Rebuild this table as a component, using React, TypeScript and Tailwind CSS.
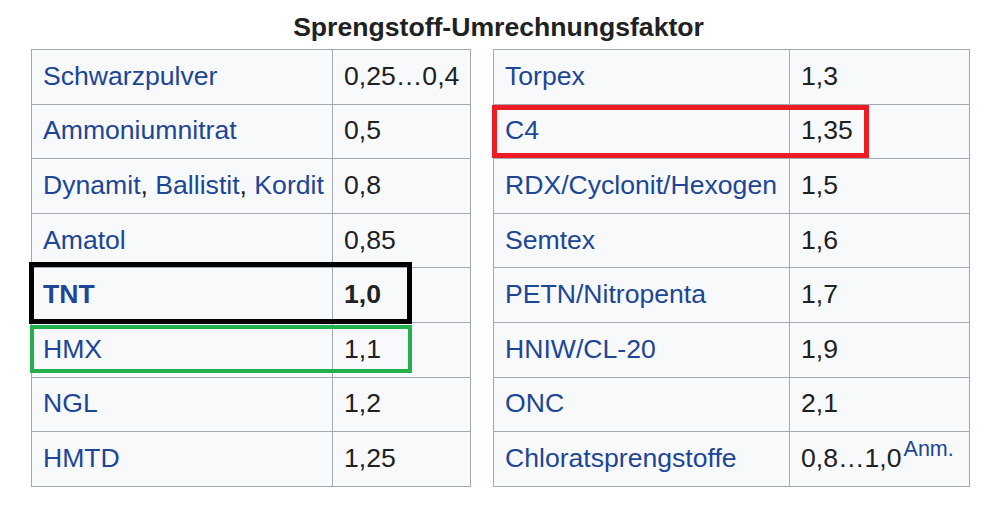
import React from "react";

const LINK = "text-[#1d4696]";

type Row = { name: React.ReactNode; value: React.ReactNode; bold?: boolean };

const left: Row[] = [
  { name: <span className={LINK}>Schwarzpulver</span>, value: "0,25…0,4" },
  { name: <span className={LINK}>Ammoniumnitrat</span>, value: "0,5" },
  {
    name: (
      <span>
        <span className={LINK}>Dynamit</span>, <span className={LINK}>Ballistit</span>,{" "}
        <span className={LINK}>Kordit</span>
      </span>
    ),
    value: "0,8",
  },
  { name: <span className={LINK}>Amatol</span>, value: "0,85" },
  { name: <span className={`${LINK} font-bold`}>TNT</span>, value: <span className="font-bold">1,0</span> },
  { name: <span className={LINK}>HMX</span>, value: "1,1" },
  { name: <span className={LINK}>NGL</span>, value: "1,2" },
  { name: <span className={LINK}>HMTD</span>, value: "1,25" },
];

const right: Row[] = [
  { name: <span className={LINK}>Torpex</span>, value: "1,3" },
  { name: <span className={LINK}>C4</span>, value: "1,35" },
  { name: <span className={LINK}>RDX/Cyclonit/Hexogen</span>, value: "1,5" },
  { name: <span className={LINK}>Semtex</span>, value: "1,6" },
  { name: <span className={LINK}>PETN/Nitropenta</span>, value: "1,7" },
  { name: <span className={LINK}>HNIW/CL-20</span>, value: "1,9" },
  { name: <span className={LINK}>ONC</span>, value: "2,1" },
  {
    name: <span className={LINK}>Chloratsprengstoffe</span>,
    value: (
      <span>
        0,8…1,0<sup className={`${LINK} text-[21.5px] ml-[2px]`}>Anm.</sup>
      </span>
    ),
  },
];

function Table({ rows, c1, c2 }: { rows: Row[]; c1: string; c2: string }) {
  return (
    <div className="flex flex-col border-l border-t border-[#a2a9b1] bg-[#f8f9fa]">
      {rows.map((r, i) => (
        <div key={i} className="flex h-[54.6px]">
          <div className={`${c1} flex items-center border-r border-b border-[#a2a9b1] pl-[11px] whitespace-nowrap`}>
            {r.name}
          </div>
          <div className={`${c2} flex items-center border-r border-b border-[#a2a9b1] pl-[11px] whitespace-nowrap`}>
            {r.value}
          </div>
        </div>
      ))}
    </div>
  );
}

export default function App() {
  return (
    <div
      className="relative w-[997px] h-[507px] bg-white text-[#202122] text-[26.6px] overflow-hidden"
      style={{ fontFamily: '"Liberation Sans", Arial, sans-serif' }}
    >
      <div className="pt-[12px] h-[49px] text-center font-bold leading-[31px]">Sprengstoff-Umrechnungsfaktor</div>
      <div className="flex pl-[31px] gap-[22px]">
        <Table rows={left} c1="w-[301px]" c2="w-[138px]" />
        <Table rows={right} c1="w-[296px]" c2="w-[180px]" />
      </div>
      <div className="absolute left-[29px] top-[262px] w-[383px] h-[62px] border-[5px] border-black" />
      <div className="absolute left-[30px] top-[325px] w-[382px] h-[48px] border-[4px] border-[#22b14c]" />
      <div className="absolute left-[492px] top-[105px] w-[377px] h-[53px] border-[5px] border-[#ed1c24]" />
    </div>
  );
}
